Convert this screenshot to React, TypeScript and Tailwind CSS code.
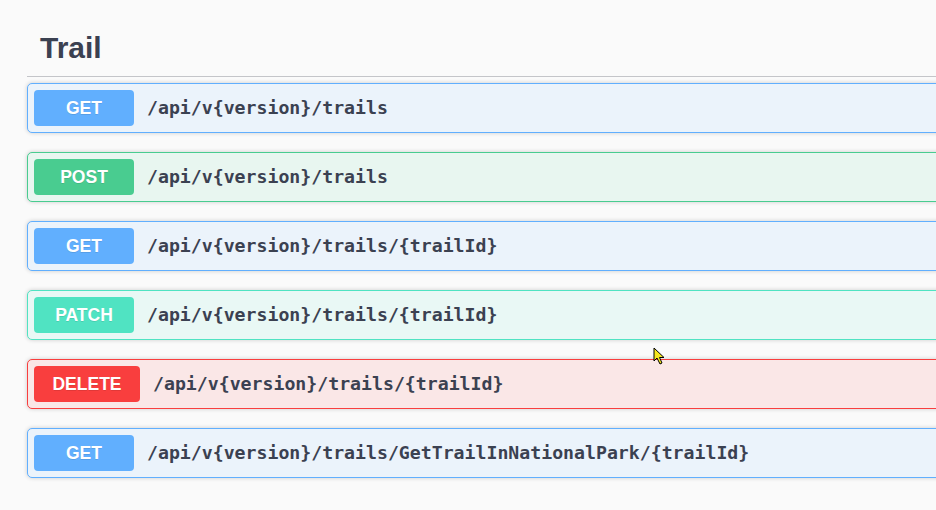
import React from 'react';

type Op = {
  method: 'GET' | 'POST' | 'PATCH' | 'DELETE';
  path: string;
};

const ops: Op[] = [
  { method: 'GET', path: '/api/v{version}/trails' },
  { method: 'POST', path: '/api/v{version}/trails' },
  { method: 'GET', path: '/api/v{version}/trails/{trailId}' },
  { method: 'PATCH', path: '/api/v{version}/trails/{trailId}' },
  { method: 'DELETE', path: '/api/v{version}/trails/{trailId}' },
  { method: 'GET', path: '/api/v{version}/trails/GetTrailInNationalPark/{trailId}' },
];

const styles: Record<Op['method'], { row: string; badge: string }> = {
  GET: { row: 'bg-[#ebf3fb] border-[#61affe]', badge: 'bg-[#61affe] min-w-[100px]' },
  POST: { row: 'bg-[#e8f6f0] border-[#49cc90]', badge: 'bg-[#49cc90] min-w-[100px]' },
  PATCH: { row: 'bg-[#e9f8f5] border-[#50e3c2]', badge: 'bg-[#50e3c2] min-w-[100px]' },
  DELETE: { row: 'bg-[#fae7e7] border-[#f93e3e]', badge: 'bg-[#f93e3e] min-w-[106px] px-[8px]' },
};

const OpBlock: React.FC<{ op: Op }> = ({ op }) => {
  const s = styles[op.method];
  return (
    <div className={`flex items-center h-[50px] mb-[19px] border rounded-[5px] px-[6px] shadow-[0_0_4px_rgba(0,0,0,0.19)] ${s.row}`}>
      <span
        className={`h-[36px] flex items-center justify-center rounded-[4px] text-white text-[17.5px] font-bold font-['Liberation_Sans',Arial,sans-serif] [text-shadow:0_1px_0_rgba(0,0,0,0.1)] ${s.badge}`}
      >
        {op.method}
      </span>
      <span className="pl-[13px] text-[18.2px] font-bold text-[#3b4151] font-['DejaVu_Sans_Mono',monospace]">
        {op.path}
      </span>
    </div>
  );
};

export default function App() {
  return (
    <div className="relative w-[936px] h-[510px] overflow-hidden bg-[#fafafa]">
      <div className="w-[1000px] pl-[27px] pt-[19px]">
        <h3 className="flex items-center h-[58px] pl-[13px] border-b border-[#c4c5c9] text-[30px] font-bold text-[#3b4151] font-['Liberation_Sans',Arial,sans-serif]">
          Trail
        </h3>
        <div className="pt-[6px]">
          {ops.map((op, i) => (
            <OpBlock key={i} op={op} />
          ))}
        </div>
      </div>

      {/* mouse pointer */}
      <svg className="absolute left-[653px] top-[347px]" width="14" height="18" viewBox="0 0 14 18">
        <path d="M1 1 L1 14 L4 11 L7 17 L9 16 L6.5 10.5 L11 10.5 Z" fill="#f5e61c" stroke="#000" strokeWidth="1" />
      </svg>
    </div>
  );
}
